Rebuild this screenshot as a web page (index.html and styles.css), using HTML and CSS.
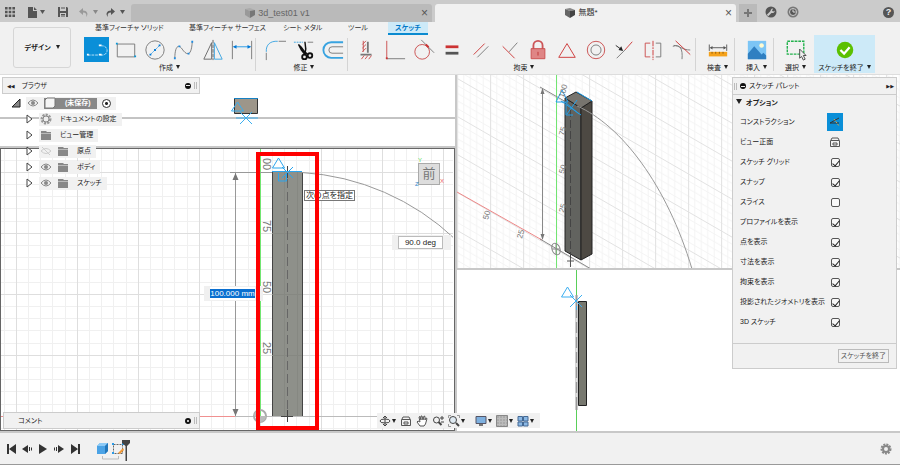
FILE: index.html
```html
<!DOCTYPE html>
<html lang="ja">
<head>
    <meta charset="UTF-8">
    <meta name="viewport" content="width=device-width, initial-scale=1.0">
    <title>無題*</title>
    <link rel="stylesheet" href="styles.css">
</head>
<body>
    <header class="titlebar">
        <div class="quick">
            <button aria-label="データパネル"><svg width="12" height="12" viewBox="0 0 12 12" fill="#555"><path d="M1 1h2.600v2.600H1zM4.700 1h2.600v2.600H4.700zM8.400 1H11v2.600H8.400zM1 4.700h2.600v2.600H1zM4.700 4.700h2.600v2.600H4.700zM8.400 4.700H11v2.600H8.400zM1 8.400h2.600V11H1zM4.700 8.400h2.600V11H4.700zM8.400 8.400H11V11H8.400z"/></svg></button>
            <button class="file" aria-label="ファイル"><svg width="18" height="12" viewBox="0 0 18 12" fill="#555"><path d="M1 1h5v4h4v7H1z"/><path d="M7 1l3 3H7zM13 4h5l-2.500 4z"/></svg></button>
            <button aria-label="保存"><svg width="12" height="12" viewBox="0 0 12 12"><path d="M1 1h9l1 1v9H1z" fill="#555"/><path d="M3 1h6v4H3zM3 7h6v4H3z" fill="#ccc"/><path d="M4 2h4M4 8.500h4M4 10h4" stroke="#555"/></svg></button>
            <button class="undo" aria-label="元に戻す"><svg width="20" height="12" viewBox="0 0 20 12"><path d="M5 2L1 5.500 5 9V6.500c3 0 4 1.500 3 4.500 3-3 1-6.500-3-6.500z" fill="#999"/><path d="M15 4h5l-2.500 4z" fill="#888"/></svg></button>
            <button aria-label="やり直し"><svg width="20" height="12" viewBox="0 0 20 12" fill="#555"><path d="M6 2l4 3.500L6 9V6.500C3 6.500 2 8 3 11 0 8 2 4.500 6 4.500z"/><path d="M15 4h5l-2.500 4z"/></svg></button>
        </div>
        <div class="doc-tab">
            <svg width="12" height="12" viewBox="0 0 12 12"><path d="M1 2l5-1 5 2-5 1z" fill="#aaa"/><path d="M1 2l5 2v7L1 8z" fill="#999"/><path d="M6 4l5-1v5l-5 3z" fill="#777"/></svg>
            <span>3d_test01 v1</span>
            <button class="close" aria-label="閉じる">×</button>
        </div>
        <div class="doc-tab current">
            <svg width="12" height="12" viewBox="0 0 12 12"><path d="M1 2l5-1 5 2-5 1z" fill="#888"/><path d="M1 2l5 2v7L1 8z" fill="#666"/><path d="M6 4l5-1v5l-5 3z" fill="#444"/></svg>
            <span>無題*</span>
            <button class="close" aria-label="閉じる">×</button>
        </div>
        <button class="new-tab" aria-label="新規"><svg width="10" height="10" viewBox="0 0 10 10"><path d="M5 1v8M1 5h8" stroke="#777" stroke-width="2"/></svg></button>
        <div class="status-icons">
            <button aria-label="拡張機能"><svg width="12" height="12" viewBox="0 0 12 12"><circle cx="6" cy="6" r="5.500" fill="#555"/><path d="M2.500 9.500l4-4" stroke="#ccc" stroke-width="2"/><path d="M6 6.500A2.500 2.500 0 0 1 8 2.500L7 5l2 .5 1-1A2.500 2.500 0 0 1 6 6.500z" fill="#ccc"/></svg></button>
            <button aria-label="ジョブの状態"><svg width="12" height="12" viewBox="0 0 12 12"><circle cx="6" cy="6" r="5.500" fill="#777"/><circle cx="6" cy="6" r="3.500" fill="#555" stroke="#ccc"/><path d="M6 3.500V6h2.500" stroke="#ddd" fill="none"/></svg></button>
            <button class="help" aria-label="ヘルプ">?</button>
        </div>
    </header>

    <div class="ribbon">
        <button class="workspace-menu">デザイン <i></i></button>
        <div class="ribbon-main">
            <nav class="ribbon-tabs">
                <a href="#" class="wide">基準フィーチャ ソリッド</a>
                <a href="#" class="wide">基準フィーチャ サーフェス</a>
                <a href="#" class="mid">シート メタル</a>
                <a href="#">ツール</a>
                <a href="#" class="selected">スケッチ</a>
            </nav>
            <div class="groups">
                <div class="group create">
                    <div class="tools">
                        <button class="on" aria-label="線分"><svg viewBox="0 0 24 24" fill="none" stroke="#bfe6fb"><path d="M2 17.500h12M16 17.500h2a4.500 4.500 0 0 0 0-10h-1" stroke-dasharray="3 1"/><path d="M1 17h2M14 17h3M14 7h3" stroke="#fff" stroke-width="2"/></svg></button>
                        <button aria-label="長方形"><svg viewBox="0 0 24 24"><path d="M2.500 5.500h19v14h-19z" fill="none" stroke="#777"/><path d="M1 4h2v2H1zM21 18h2v2h-2z" fill="#0696d7"/></svg></button>
                        <button aria-label="円"><svg viewBox="0 0 24 24"><circle cx="12" cy="12" r="10" fill="none" stroke="#777"/><path d="M7 17L17 7" stroke="#1e96e6" stroke-dasharray="2 1"/><path d="M6 16h2v2H6zM11 11h2v2h-2zM16 6h2v2h-2z" fill="#0078d7"/></svg></button>
                        <button aria-label="スプライン"><svg viewBox="0 0 24 24"><path d="M2 21C2 8 6 5 10 11s10 10 11-8" fill="none" stroke="#777"/><path d="M1 20h2v2H1zM6 7h2v2H6zM16 15h2v2h-2zM20 2h2v2h-2z" fill="#1e8be0"/></svg></button>
                        <button aria-label="ミラー"><svg viewBox="0 0 24 24" fill="none"><path d="M10.500 4v18H2z" stroke="#666"/><path d="M13.500 4v18H22z" stroke="#38a3e0"/><path d="M12 1v22" stroke="#555" stroke-dasharray="4 1"/></svg></button>
                        <button aria-label="スケッチ寸法"><svg viewBox="0 0 24 24"><path d="M1.500 2v20M22.500 2v20" stroke="#777"/><path d="M3 8.500h18" stroke="#1e96e6"/><path d="M2 8.500l4-2v4zM22 8.500l-4-2v4z" fill="#0078d7"/></svg></button>
                    </div>
                    <button class="group-label">作成 <i></i></button>
                </div>
                <div class="group modify">
                    <div class="tools">
                        <button aria-label="フィレット"><svg viewBox="0 0 24 24" fill="none"><path d="M2.500 14C2 6 7 2 15 2.500" stroke="#38a3e0"/><path d="M2.500 15v8M16 2.500h8" stroke="#777"/></svg></button>
                        <button aria-label="トリム"><svg viewBox="0 0 24 24"><path d="M1 3.500h10" stroke="#38a3e0" stroke-dasharray="2 1"/><path d="M16 3.500h6" stroke="#777"/><path d="M6 6l3 3 3 4 3 3-2 1-4-5zM13 3l1 8-1 5" fill="#111" stroke="#111" stroke-width="1.500"/><circle cx="12.500" cy="19.500" r="2.500" fill="none" stroke="#111" stroke-width="2"/><circle cx="18.500" cy="18" r="2.500" fill="none" stroke="#111" stroke-width="2"/></svg></button>
                        <button aria-label="オフセット"><svg viewBox="0 0 24 24" fill="none"><path d="M23 3.500H10a8 8 0 0 0 0 17h13" stroke="#38a3e0" stroke-width="2"/><path d="M23 8.500H11a3.500 3.500 0 0 0 0 7h12" stroke="#777"/></svg></button>
                    </div>
                    <button class="group-label">修正 <i></i></button>
                </div>
                <div class="group constraints">
                    <div class="tools">
                        <button aria-label="水平/垂直"><svg viewBox="0 0 24 24"><path d="M14 3v12M6 17h12" stroke="#777" stroke-width="2"/><path d="M12 2L8 6M12 6l-4 4M12 10l-4 4M9 2v12M10 18l-3 4M14 18l-3 4M18 18l-3 4" stroke="#c94b4b"/></svg></button>
                        <button aria-label="一致"><svg viewBox="0 0 24 24"><path d="M3 2v20" stroke="#c94b4b"/><path d="M3 21.500h20" stroke="#777"/><path d="M2 20h2v2H2z" fill="#c33"/></svg></button>
                        <button aria-label="接線"><svg viewBox="0 0 24 24" fill="none"><circle cx="10" cy="14" r="8" stroke="#c94b4b"/><path d="M9 1l14 14" stroke="#777"/><path d="M14 6l3 3" stroke="#c33" stroke-width="2"/></svg></button>
                        <button aria-label="等しい"><svg viewBox="0 0 24 24"><path d="M5 8.500h14" stroke="#c33" stroke-width="3"/><path d="M5 15.500h14" stroke="#555" stroke-width="3"/></svg></button>
                        <button aria-label="平行"><svg viewBox="0 0 24 24"><path d="M4 17L16 5" stroke="#c33"/><path d="M8 20L20 8" stroke="#777"/></svg></button>
                        <button aria-label="直交"><svg viewBox="0 0 24 24"><path d="M4 8l13 13" stroke="#c33"/><path d="M11 14l9-10" stroke="#777"/></svg></button>
                        <button aria-label="固定/固定解除"><svg viewBox="0 0 24 24"><path d="M7 11V7a5 5 0 0 1 10 0v4" fill="none" stroke="#cc5557" stroke-width="2"/><path d="M4.500 10.500h15v11h-15z" fill="#df8585" stroke="#c94b4b"/><path d="M12 14v4" stroke="#b33"/></svg></button>
                        <button aria-label="中点"><svg viewBox="0 0 24 24"><path d="M12 5l9 15H3z" fill="none" stroke="#c33"/></svg></button>
                        <button aria-label="同心円"><svg viewBox="0 0 24 24" fill="none"><circle cx="12" cy="12" r="9.500" stroke="#c94b4b"/><circle cx="12" cy="12" r="5.500" stroke="#777"/></svg></button>
                        <button aria-label="同一線上"><svg viewBox="0 0 24 24"><path d="M13 12l8-9" stroke="#c33"/><path d="M4 21l9-9" stroke="#777"/><path d="M3 7l7 5" stroke="#222"/><path d="M11 13l-5-1 3-4z" fill="#222"/></svg></button>
                        <button aria-label="対称"><svg viewBox="0 0 24 24" fill="none"><path d="M9 4.500H3.500v15H9" stroke="#c94b4b"/><path d="M15 4.500h5.500v15H15" stroke="#777"/><path d="M12 2v21" stroke="#c33" stroke-dasharray="6 1 2 1"/></svg></button>
                        <button aria-label="曲率"><svg viewBox="0 0 24 24" fill="none"><path d="M2 8c8-3 11 3 10 14M3 7c6 0 9 5 18 5" stroke="#777"/><path d="M5 2l16 15" stroke="#c33"/></svg></button>
                    </div>
                    <button class="group-label">拘束 <i></i></button>
                </div>
                <div class="group single">
                    <div class="tools">
                        <button aria-label="計測"><svg viewBox="0 0 24 24"><path d="M2.500 6v7M21.500 6v7M4 9.500h16" stroke="#555"/><path d="M3 9.500l3-2v4zM21 9.500l-3-2v4z" fill="#555"/><path d="M2 14h20v5H2z" fill="#f5a21b"/><path d="M5.500 14v2M9.500 14v2M13.500 14v2M17.500 14v2" stroke="#8a5a10"/></svg></button>
                    </div>
                    <button class="group-label">検査 <i></i></button>
                </div>
                <div class="group single">
                    <div class="tools">
                        <button aria-label="キャンバス"><svg viewBox="0 0 24 24"><path d="M2 2h20v20H2z" fill="#7cc5f5"/><path d="M2 16l7-8 8 9 2-2 3 3v4H2z" fill="#2f7fc1"/><circle cx="17" cy="7" r="2.500" fill="#fffbd0"/></svg></button>
                    </div>
                    <button class="group-label">挿入 <i></i></button>
                </div>
                <div class="group single last">
                    <div class="tools">
                        <button aria-label="選択"><svg viewBox="0 0 24 24"><path d="M2.500 2.500h18v14h-18z" fill="none" stroke="#22b14c" stroke-width="1.500" stroke-dasharray="3 1"/><path d="M16 11v10l2-2 2 4 2-1-2-4h3z" fill="#eee" stroke="#444"/></svg></button>
                    </div>
                    <button class="group-label">選択 <i></i></button>
                </div>
                <div class="group finish">
                    <div class="tools">
                        <button aria-label="スケッチを終了"><svg viewBox="0 0 24 24"><circle cx="12" cy="12" r="9" fill="#5cc000"/><path d="M7 12l4 4 6-7" fill="none" stroke="#fff" stroke-width="2.500"/></svg></button>
                    </div>
                    <button class="group-label">スケッチを終了 <i></i></button>
                </div>
            </div>
        </div>
    </div>

    <main class="workspace">
        <div class="views left">
            <section class="view">
                <svg class="scene" fill="none">
                    <path d="M0 43h2000" stroke="#888"/>
                    <path d="M234.500 23.500h23v15h-23z" fill="#9d968a" stroke="#333"/>
                    <path d="M234 23.500h24" stroke="#1681c4"/>
                    <path d="M237.500 27l-6 9h12zM240 37l12 12M252 37l-12 12M236 43h22" stroke="#3aaef0"/>
                </svg>
            </section>
            <section class="view active">
                <svg class="scene" fill="none">
                    <defs>
                        <pattern id="grid" x="16" y="23" width="61" height="61" patternUnits="userSpaceOnUse">
                            <path d="M12.500 0v61M24.500 0v61M36.500 0v61M49.500 0v61M0 12.500h61M0 24.500h61M0 36.500h61M0 49.500h61" stroke="#f0f0f0"/>
                            <path d="M.5 0v61M0 .5h61" stroke="#dedede"/>
                        </pattern>
                    </defs>
                    <rect width="100%" height="100%" fill="url(#grid)"/>
                    <path d="M0 267.500h260" stroke="#f09090"/>
                    <path d="M235 267.500h220" stroke="#bbb"/>
                    <path d="M260.500 0v268" stroke="#72e572"/>
                    <path d="M272 23h30v244h-30z" fill="#8e908a"/>
                    <path d="M272.500 23v244M302.500 23v244" stroke="#444"/>
                    <path d="M272 84.500h30M272 145.500h30M272 206.500h30M284.500 23v244M297.500 23v244" stroke="#868882"/>
                    <path d="M287.500 30v236" stroke="#666" stroke-dasharray="9 4"/>
                    <path d="M230 23.500h42M302 23.500A244 244 0 0 1 455 90M235.500 24v243" stroke="#999"/>
                    <path d="M235.500 24l-3 7h6zM235.500 267l-3-7h6z" fill="#777"/>
                    <path d="M281 267.500h12M287.500 261v12M287.500 17v12" stroke="#444"/>
                    <circle cx="260" cy="267" r="6" stroke="#aaa" stroke-width="2"/>
                    <path d="M260 267h6a6 6 0 0 1-6 6zM260 267v-6a6 6 0 0 0-6 6z" fill="#bbb"/>
                    <path d="M272 22.500h30M278.500 9l-6 10h12zM282 18l11 11M293 18l-11 11M278.500 24v8h8v-8" stroke="#2ba5ee"/>
                    <g class="scale big">
                        <text transform="translate(263 9) rotate(90)">00</text>
                        <text transform="translate(263 71) rotate(90)">75</text>
                        <text transform="translate(263 132) rotate(90)">50</text>
                        <text transform="translate(263 193) rotate(90)">25</text>
                    </g>
                </svg>
                <div class="viewcube"><span class="y">Y</span>前<span class="z">Z</span><span class="x">X</span></div>
                <div class="hint">次の点を指定</div>
                <div class="dim length"><input type="text" value="100.000 mm" aria-label="長さ"></div>
                <div class="dim angle"><input type="text" value="90.0 deg" aria-label="角度"></div>
                <div class="highlight"></div>
            </section>
        </div>
        <div class="views right">
            <section class="view">
                <svg class="scene" fill="none">
                    <defs>
                        <pattern id="iso" width="33" height="38" patternUnits="userSpaceOnUse" patternTransform="translate(99 174) skewY(30)">
                            <path d="M6.600 0v38M13.200 0v38M19.800 0v38M26.400 0v38M0 7.600h33M0 15.200h33M0 22.800h33M0 30.400h33" stroke="#f4f4f4"/>
                            <path d="M.5 0v38M0 .5h33" stroke="#e2e2e2"/>
                        </pattern>
                    </defs>
                    <rect width="100%" height="100%" fill="url(#iso)"/>
                    <path d="M99.500 0v200" stroke="#72e572"/>
                    <path d="M0 117l85 48" stroke="#e88"/>
                    <path d="M83 164l51 30M83 12l26 15M85.500 14v150" stroke="#888"/>
                    <path d="M85.500 13l-2 6h4zM85.500 165l-2-6h4z" fill="#777"/>
                    <path d="M108 23l16 10v152l-16-9z" fill="#62635f" stroke="#222"/>
                    <path d="M124 33l11-7v153l-11 6z" fill="#4d4943" stroke="#222"/>
                    <path d="M108 23l11-6 16 9-11 7z" fill="#77746e" stroke="#222"/>
                    <path d="M113.500 34v153" stroke="#444" stroke-dasharray="8 3"/>
                    <path d="M110 186h7M113.500 183v9" stroke="#555"/>
                    <path d="M120 31C164 50 210 110 235 194" stroke="#999"/>
                    <ellipse cx="99" cy="174" rx="4" ry="6" stroke="#888" transform="rotate(-20 99 174)"/>
                    <path d="M95 174h8M99 169v10" stroke="#888"/>
                    <path d="M120 17l15 9M105 15l-6 12h12zM108 27l14 12M110 39l10-14M109 30v10h7M104 26l20 14" stroke="#229fe8"/>
                    <g class="scale">
                        <text transform="translate(107 23) rotate(-75)">100</text>
                        <text transform="translate(107 61) rotate(-75)">75</text>
                        <text transform="translate(107 99) rotate(-75)">50</text>
                        <text transform="translate(107 138) rotate(-75)">25</text>
                        <text transform="translate(31 145) rotate(-75)">50</text>
                        <text transform="translate(65 164) rotate(-75)">25</text>
                    </g>
                </svg>
            </section>
            <section class="view">
                <svg class="scene" fill="none">
                    <path d="M119.500 0v400" stroke="#59cf59"/>
                    <path d="M119.500 25v115" stroke="#999" stroke-width="2"/>
                    <path d="M119.500 48v90" stroke="#ddd" stroke-width="2" stroke-dasharray="4 11"/>
                    <path d="M121.500 31.500h8v104h-8z" fill="#77786f" stroke="#222"/>
                    <path d="M110.500 17l-6 10h12zM113 25l12 12M125 25l-12 12M119.500 36v4" stroke="#3aaef0"/>
                </svg>
            </section>
        </div>

        <aside class="browser">
            <div class="bar">
                <span class="rewind">◀◀</span>
                <span>ブラウザ</span>
                <button class="dot minus" aria-label="折りたたむ"></button>
                <span class="grip"></span>
            </div>
            <ul class="tree">
                <li class="root">
                    <svg class="tri" viewBox="0 0 10 10"><path d="M9 1v8H1z" fill="#888" stroke="#222"/></svg>
                    <div class="node">
                        <svg class="eye" viewBox="0 0 12 12"><path d="M1 6q5-6 10 0-5 6-10 0z" fill="#eee" stroke="#888"/><circle cx="6" cy="6" r="2" fill="#888"/></svg>
                        <span class="name"><svg class="icon" viewBox="0 0 12 12"><path d="M1 3l2-2h8v8l-2 2H1z" fill="#f5f5f5" stroke="#777"/></svg>(未保存)</span>
                        <input type="radio" checked aria-label="アクティブ">
                    </div>
                </li>
                <li>
                    <svg class="tri" viewBox="0 0 10 10"><path d="M3 1l5 4-5 4z" fill="#fff" stroke="#444"/></svg>
                    <div class="node">
                        <svg class="icon" viewBox="0 0 12 12"><circle cx="6" cy="6" r="4" fill="none" stroke="#999" stroke-width="3" stroke-dasharray="2 1"/><circle cx="6" cy="6" r="3" fill="#eee" stroke="#888"/></svg>
                        <span>ドキュメントの設定</span>
                    </div>
                </li>
                <li>
                    <svg class="tri" viewBox="0 0 10 10"><path d="M3 1l5 4-5 4z" fill="#fff" stroke="#444"/></svg>
                    <div class="node">
                        <svg class="icon" viewBox="0 0 12 12"><path d="M1 2h5l1 1h4v8H1z" fill="#888"/><path d="M1 4.500h10" stroke="#bbb"/></svg>
                        <span>ビュー管理</span>
                    </div>
                </li>
                <li>
                    <svg class="tri" viewBox="0 0 10 10"><path d="M3 1l5 4-5 4z" fill="#fff" stroke="#444"/></svg>
                    <div class="node">
                        <svg class="eye" viewBox="0 0 12 12"><path d="M1 6q5-5 10 0-5 5-10 0zM2 2l8 8" fill="none" stroke="#ccc"/></svg>
                        <svg class="icon" viewBox="0 0 12 12"><path d="M1 2h5l1 1h4v8H1z" fill="#888"/><path d="M1 4.500h10" stroke="#bbb"/></svg>
                        <span>原点</span>
                    </div>
                </li>
                <li>
                    <svg class="tri" viewBox="0 0 10 10"><path d="M3 1l5 4-5 4z" fill="#fff" stroke="#444"/></svg>
                    <div class="node">
                        <svg class="eye" viewBox="0 0 12 12"><path d="M1 6q5-6 10 0-5 6-10 0z" fill="#eee" stroke="#888"/><circle cx="6" cy="6" r="2" fill="#888"/></svg>
                        <svg class="icon" viewBox="0 0 12 12"><path d="M1 2h5l1 1h4v8H1z" fill="#888"/><path d="M1 4.500h10" stroke="#bbb"/></svg>
                        <span>ボディ</span>
                    </div>
                </li>
                <li>
                    <svg class="tri" viewBox="0 0 10 10"><path d="M3 1l5 4-5 4z" fill="#fff" stroke="#444"/></svg>
                    <div class="node">
                        <svg class="eye" viewBox="0 0 12 12"><path d="M1 6q5-6 10 0-5 6-10 0z" fill="#eee" stroke="#888"/><circle cx="6" cy="6" r="2" fill="#888"/></svg>
                        <svg class="icon" viewBox="0 0 12 12"><path d="M1 2h5l1 1h4v8H1z" fill="#888"/><path d="M1 4.500h10" stroke="#bbb"/></svg>
                        <span>スケッチ</span>
                    </div>
                </li>
            </ul>
        </aside>

        <div class="bar comments">
            <span>コメント</span>
            <button class="dot plus" aria-label="コメントを追加"></button>
            <span class="grip"></span>
        </div>

        <div class="navbar">
            <button aria-label="オービット"><svg width="12" height="12" viewBox="0 0 12 12" fill="none" stroke="#444"><path d="M6 1v10"/><ellipse cx="6" cy="6" rx="5" ry="2"/><path d="M4 3l2-2 2 2M4 9l2 2 2-2"/></svg><i></i></button>
            <button aria-label="ビュー正面"><svg width="12" height="12" viewBox="0 0 12 12" fill="none" stroke="#555"><path d="M1.500 4.500h9v6h-9zM4 7h4v2H4zM2 4l1-2h6l1 2"/></svg></button>
            <button aria-label="画面移動"><svg width="12" height="12" viewBox="0 0 12 12" fill="#fff" stroke="#555"><path d="M4 11L1 7l1-1 2 1-1-5 1-.5L5 5V1h1l1 4 1-4 1 .5V5l1-2 1 .5L9.500 9 8 11z"/></svg></button>
            <button aria-label="ズーム"><svg width="12" height="12" viewBox="0 0 12 12" fill="none" stroke="#444"><circle cx="4.500" cy="5" r="3"/><path d="M6.500 7l3 3" stroke-width="2"/><path d="M8 3h4M10 1v4M9 7h3"/></svg></button>
            <button class="fit" aria-label="フィット"><svg width="12" height="12" viewBox="0 0 12 12" fill="none" stroke="#444"><path d="M.5 3V.5H3M9 .5h2.500V3M.5 9v2.500H3" stroke="#999"/><circle cx="5" cy="5" r="3.500" fill="#dfeaf2"/><path d="M8 8l3 3" stroke-width="2"/></svg><i></i></button>
            <button aria-label="表示設定"><svg width="12" height="12" viewBox="0 0 12 12"><path d="M1 1.500h10v7H1z" fill="#7eb0df" stroke="#556"/><path d="M4 9h4v2H4z" fill="#777"/></svg><i></i></button>
            <button aria-label="グリッドとスナップ"><svg width="12" height="12" viewBox="0 0 12 12"><path d="M.5.5h11v11H.5z" fill="#aaa" stroke="#888"/><path d="M3.500 1v10M6.500 1v10M9.500 1v10M1 3.500h10M1 6.500h10M1 9.500h10" stroke="#bbb"/></svg><i></i></button>
            <button aria-label="ビューポート"><svg width="12" height="12" viewBox="0 0 12 12" fill="#8ab8e5" stroke="#446994"><path d="M1 1.500h4.500V6H1zM6.500 1.500H11V6H6.500zM1 7h4.500v4H1zM6.500 7H11v4H6.500z"/></svg><i></i></button>
        </div>

        <aside class="palette">
            <div class="palette-head">
                <span class="grip"></span>
                <button class="dot minus" aria-label="折りたたむ"></button>
                <span>スケッチ パレット</span>
                <span class="forward">▶▶</span>
            </div>
            <div class="palette-body">
                <h2><i></i> オプション</h2>
                <div class="option"><span>コンストラクション</span><button class="construct" aria-label="コンストラクション"><svg width="15" height="16" viewBox="0 0 15 16" fill="none"><path d="M12 4L3 9h9" stroke="#333"/><path d="M7 5l5 7" stroke="#e0a040" stroke-dasharray="2 1"/></svg></button></div>
                <div class="option"><span>ビュー正面</span><button class="lookat" aria-label="ビュー正面"><svg width="12" height="12" viewBox="0 0 12 12" fill="none" stroke="#555"><path d="M1.500 4.500h9v6h-9zM4 7h4v2H4zM2 4l1-2h6l1 2"/></svg></button></div>
                <div class="option"><label for="o1">スケッチ グリッド</label><input type="checkbox" id="o1" checked></div>
                <div class="option"><label for="o2">スナップ</label><input type="checkbox" id="o2" checked></div>
                <div class="option"><label for="o3">スライス</label><input type="checkbox" id="o3"></div>
                <div class="option"><label for="o4">プロファイルを表示</label><input type="checkbox" id="o4" checked></div>
                <div class="option"><label for="o5">点を表示</label><input type="checkbox" id="o5" checked></div>
                <div class="option"><label for="o6">寸法を表示</label><input type="checkbox" id="o6" checked></div>
                <div class="option"><label for="o7">拘束を表示</label><input type="checkbox" id="o7" checked></div>
                <div class="option"><label for="o8">投影されたジオメトリを表示</label><input type="checkbox" id="o8" checked></div>
                <div class="option"><label for="o9">3D スケッチ</label><input type="checkbox" id="o9" checked></div>
            </div>
            <div class="palette-foot"><button>スケッチを終了</button></div>
        </aside>
    </main>

    <footer class="timeline">
        <button aria-label="先頭へ"><svg width="12" height="12" viewBox="0 0 12 12" fill="#333"><path d="M2 1h2v10H2zM11 1v10L4 6z"/></svg></button>
        <button aria-label="前へ"><svg width="12" height="12" viewBox="0 0 12 12" fill="#333"><path d="M7 2v8L1 6zM8 4h1v4H8zM10 4.500h1v3h-1z"/></svg></button>
        <button aria-label="再生"><svg width="12" height="12" viewBox="0 0 12 12" fill="#333"><path d="M2 1v10l8-5z"/></svg></button>
        <button aria-label="次へ"><svg width="12" height="12" viewBox="0 0 12 12" fill="#333"><path d="M5 2v8l6-4zM3 4h1v4H3zM1 4.500h1v3H1z"/></svg></button>
        <button aria-label="末尾へ"><svg width="12" height="12" viewBox="0 0 12 12" fill="#333"><path d="M2 1v10l7-5zM9 1h2v10H9z"/></svg></button>
        <svg class="history" width="36" height="24" viewBox="0 0 36 24" fill="none">
            <path d="M1 7l3-3h8v8l-3 3H1z" fill="#4ba3e6"/><path d="M1 7l3-3h8L9 7z" fill="#8dcaf6"/><path d="M9 7l3-3v8l-3 3z" fill="#2277bb"/>
            <path d="M17.500 5.500h9v9h-9z" stroke="#666" stroke-dasharray="2 1"/><path d="M16 4h2v2h-2zM26 4h2v2h-2zM16 13h2v2h-2z" fill="#2a9be8"/><path d="M22 14l5-5 1 2-4 4z" fill="#f29a38"/>
            <path d="M6.500 17v3h16v-3" stroke="#bbb"/>
            <path d="M26 1h8v3l-3 3v15h-1.500V7L26 4z" fill="#444"/>
        </svg>
        <button class="settings" aria-label="設定"><svg width="12" height="12" viewBox="0 0 12 12"><circle cx="6" cy="6" r="4.500" fill="none" stroke="#888" stroke-width="2" stroke-dasharray="2 1"/><circle cx="6" cy="6" r="3" fill="none" stroke="#888" stroke-width="2"/></svg></button>
    </footer>
</body>
</html>
```
FILE: styles.css
```css
* {
    box-sizing: border-box;
}
body {
    font-family: "Liberation Sans", "Noto Sans CJK JP", sans-serif;
    font-size: 7px;
    font-feature-settings: "palt";
    line-height: 10px;
    color: #222;
    margin: 0;
    min-height: 100vh;
    background: #f1f1f1;
    display: flex;
    flex-direction: column;
}
button {
    font: inherit;
    font-feature-settings: inherit;
    color: inherit;
    background: none;
    border: none;
    padding: 0;
    cursor: pointer;
    white-space: nowrap;
}
svg {
    display: block;
    flex: none;
}
/* small drop-down arrow */
i {
    display: inline-block;
    border: 2px solid transparent;
    border-top: 4px solid #222;
    border-bottom: 0;
    margin-left: 1px;
    vertical-align: 1px;
}

/* title bar */
.titlebar {
    display: flex;
    align-items: flex-end;
    height: 22px;
    background: #cbcbcb;
}
.quick {
    width: 131px;
    height: 20px;
    padding-left: 4px;
    display: flex;
    align-items: center;
}
.quick button {
    margin-right: 7px;
}
.quick .file {
    margin: 0 12px 0 4px;
}
.quick .undo {
    margin-left: 2px;
}
.doc-tab {
    flex: 0 1 301px;
    height: 18px;
    margin-right: 3px;
    padding: 0 4px;
    border-radius: 3px 3px 0 0;
    background: #bababa;
    color: #666;
    font-size: 9px;
    display: flex;
    align-items: center;
    justify-content: center;
    gap: 2px;
}
.doc-tab svg {
    margin-left: auto;
}
.doc-tab.current {
    background: #f1f1f1;
    color: #333;
    font-size: 8px;
}
.close {
    margin-left: auto;
    font-size: 12px;
    color: #555;
}
.new-tab {
    width: 18px;
    height: 18px;
    padding: 4px;
    background: #bababa;
}
.status-icons {
    flex: 1;
    height: 20px;
    padding: 0 6px 0 8px;
    display: flex;
    align-items: center;
    gap: 10px;
}
.help {
    width: 11px;
    height: 11px;
    margin-left: auto;
    border-radius: 50%;
    background: #555;
    color: #eee;
    font-size: 9px;
    font-weight: bold;
}

/* ribbon */
.ribbon {
    display: flex;
    height: 53px;
    border-bottom: 1px solid #ddd;
}
.workspace-menu {
    width: 58px;
    height: 41px;
    margin: 5px 12px 0 13px;
    border: 1px solid #d6d6d6;
    border-radius: 3px;
    font-weight: bold;
}
.workspace-menu i {
    margin-left: 3px;
}
.ribbon-main {
    flex: 1;
}
.ribbon-tabs {
    display: flex;
    height: 13px;
    padding-left: 12px;
    line-height: 12px;
    white-space: nowrap;
}
.ribbon-tabs a {
    width: 40px;
    color: #333;
    text-decoration: none;
}
.ribbon-tabs .wide {
    width: 94px;
}
.ribbon-tabs .mid {
    width: 65px;
}
.ribbon-tabs .selected {
    text-align: center;
    font-weight: bold;
    color: #0078c8;
    background: #cdeaf8;
    border-bottom: 2px solid #0a8ad0;
}
.groups {
    display: flex;
}
.group {
    position: relative;
    height: 38px;
    padding-top: 2px;
    margin-right: 4px;
    display: flex;
    flex-direction: column;
}
.group::after {
    content: "";
    position: absolute;
    right: 0;
    top: 3px;
    height: 33px;
    border-right: 1px solid #d4d4d4;
}
.group.last::after, .group.finish::after {
    display: none;
}
.create {
    width: 173px;
}
.modify {
    width: 88px;
}
.constraints {
    width: 344px;
}
.single {
    width: 35px;
}
.last {
    margin-right: 1px;
}
.tools {
    display: flex;
}
.tools button {
    flex: 1;
    height: 25px;
    display: flex;
    align-items: center;
    justify-content: center;
}
.tools svg {
    width: 22px;
    height: 22px;
}
.tools .on {
    background: #0a8fd8;
    flex: 0 0 25px;
    margin: 0 2px 0 1px;
}
.finish {
    width: 61px;
    margin: 0;
    background: #cdeaf8;
}
.group-label {
    height: 11px;
    line-height: 11px;
}

/* viewports */
.workspace {
    position: relative;
    flex: 1;
    min-height: 358px;
    padding-bottom: 2px;
    background: #c8c8c8;
    display: grid;
    grid-template-columns: 455fr 443fr;
    gap: 2px;
}
.views {
    display: grid;
    gap: 2px;
}
.left {
    grid-template-rows: 71fr 283fr;
}
.right {
    grid-template-rows: 193fr 161fr;
}
.view {
    position: relative;
    overflow: hidden;
    background: #fff;
}
.view.active {
    border: 1px solid #666;
}
.scene {
    position: absolute;
    left: 0;
    top: 0;
    width: 100%;
    height: 100%;
}
.active .scene {
    left: -1px;
}
.scale {
    font-size: 8px;
    fill: #777;
}
.scale.big {
    font-size: 11px;
}
.viewcube {
    position: absolute;
    left: 417px;
    top: 14px;
    width: 22px;
    height: 22px;
    border: 1px solid #aaa;
    background: #ddd;
    color: #777;
    font-size: 13px;
    line-height: 20px;
    text-align: center;
}
.viewcube span {
    position: absolute;
    font-size: 6px;
    line-height: 7px;
}
.viewcube .y {
    left: -1px;
    top: -7px;
    color: #5d5;
}
.viewcube .z {
    left: -4px;
    bottom: -4px;
    color: #38c;
}
.viewcube .x {
    right: -5px;
    bottom: -1px;
    color: #e66;
}
.hint {
    position: absolute;
    left: 303px;
    top: 41px;
    height: 11px;
    padding: 0 1px;
    border: 1px solid #777;
    background: #fff;
    font-size: 8px;
    line-height: 9px;
    white-space: nowrap;
}
.dim {
    position: absolute;
    height: 15px;
    padding: 1px 8px 1px 6px;
    background: #f0f0f0;
}
.dim input {
    display: block;
    width: 45px;
    height: 13px;
    padding: 0;
    border: 1px solid #bbb;
    font: 8px "Liberation Sans", sans-serif;
    text-align: center;
    color: #222;
    background: #fff;
}
.dim.length {
    left: 203px;
    top: 137px;
}
.dim.length input {
    color: #fff;
    background: #0a6fd0;
    border: 2px solid #fff;
    border-width: 2px 0;
}
.dim.angle {
    left: 391px;
    top: 86px;
}
.highlight {
    position: absolute;
    left: 255px;
    top: 3px;
    width: 63px;
    height: 278px;
    border: 4px solid #f00;
}

/* browser */
.browser {
    position: absolute;
    left: 2px;
    top: 2px;
    width: 198px;
}
.bar {
    display: flex;
    align-items: center;
    gap: 7px;
    height: 17px;
    padding: 0 2px 0 4px;
    background: #f1f1f1;
    border: 1px solid #ccc;
}
.rewind, .forward {
    font-family: "DejaVu Sans", sans-serif;
    font-size: 5px;
}
.dot {
    width: 6px;
    height: 6px;
    border-radius: 50%;
    background: #111;
    flex: none;
}
.dot.minus {
    padding: 0 1px;
}
.dot.minus::before {
    content: "";
    display: block;
    height: 1px;
    background: #eee;
}
.dot.plus {
    background: #fff;
    border: 2px solid #111;
}
.bar .dot {
    margin-left: auto;
}
.grip {
    width: 3px;
    height: 7px;
    border: 1px solid #bbb;
    border-width: 0 1px;
}
.bar .grip {
    margin-left: -4px;
}
.tree {
    list-style: none;
    margin: 1px 0 0;
    padding: 0;
}
.tree li {
    display: flex;
    align-items: center;
    height: 16px;
    padding-left: 22px;
}
.tree .root {
    padding-left: 9px;
}
.tri {
    width: 10px;
    height: 10px;
    margin-right: 5px;
}
.node {
    display: flex;
    align-items: center;
    gap: 5px;
    height: 13px;
    padding: 0 5px 0 1px;
    background: #f1f1f1;
    white-space: nowrap;
}
.node .icon {
    width: 12px;
    height: 12px;
    margin-right: 3px;
}
.eye {
    width: 12px;
    height: 12px;
}
.name {
    display: flex;
    align-items: center;
    width: 53px;
    height: 11px;
    background: #888;
    color: #fff;
    font-weight: bold;
}
.name .icon {
    margin-right: 9px;
}
.node input {
    appearance: none;
    width: 9px;
    height: 9px;
    margin: 0;
    border: 1px solid #333;
    border-radius: 50%;
    background: radial-gradient(circle, #222 1px, #fff 2px);
}
.comments {
    position: absolute;
    left: 3px;
    bottom: 4px;
    width: 197px;
    padding-left: 14px;
}

/* navigation bar */
.navbar {
    position: absolute;
    left: 377px;
    bottom: 5px;
    height: 15px;
    padding: 0 6px 0 2px;
    background: #f1f1f1;
    display: flex;
    align-items: center;
    gap: 4px;
}
.navbar button {
    display: flex;
    align-items: center;
}
.navbar .fit {
    margin-right: 6px;
}

/* sketch palette */
.palette {
    position: absolute;
    right: 3px;
    top: 2px;
    width: 165px;
    background: #f1f1f1;
    border: 1px solid #ccc;
}
.palette-head {
    display: flex;
    align-items: center;
    gap: 3px;
    height: 17px;
    padding: 0 2px 0 1px;
    border-bottom: 1px solid #ccc;
}
.forward {
    margin-left: auto;
}
.palette-body {
    padding: 3px 7px 11px;
}
.palette h2 {
    font-size: 7px;
    line-height: 10px;
    margin: 0 0 4px -4px;
}
.palette h2 i {
    border-width: 5px 3px 0;
    margin: 0 2px 0 0;
}
.option {
    display: grid;
    grid-template-columns: 87px 16px;
    align-items: center;
    justify-items: center;
    height: 20px;
    white-space: nowrap;
}
.option > :first-child {
    justify-self: start;
}
.construct {
    width: 16px;
    height: 18px;
    background: #0a8fd8;
}
.option input {
    appearance: none;
    width: 9px;
    height: 9px;
    margin: 0;
    border: 1px solid #555;
    border-radius: 2px;
    background: #f8f8f8;
}
.option input:checked::before {
    content: "";
    display: block;
    width: 3px;
    height: 6px;
    margin-left: 2px;
    border: solid #222;
    border-width: 0 1px 1px 0;
    transform: rotate(40deg);
}
.palette-foot {
    display: flex;
    justify-content: flex-end;
    padding: 5px 7px;
    border-top: 1px solid #ccc;
}
.palette-foot button {
    height: 14px;
    padding: 0 2px;
    border: 1px solid #bbb;
    color: #555;
}

/* timeline */
.timeline {
    display: flex;
    align-items: center;
    gap: 4px;
    height: 32px;
    padding: 0 8px 0 5px;
    border-bottom: 1px solid #999;
}
.history {
    margin: 4px 0 0 11px;
}
.settings {
    margin-left: auto;
}
```
